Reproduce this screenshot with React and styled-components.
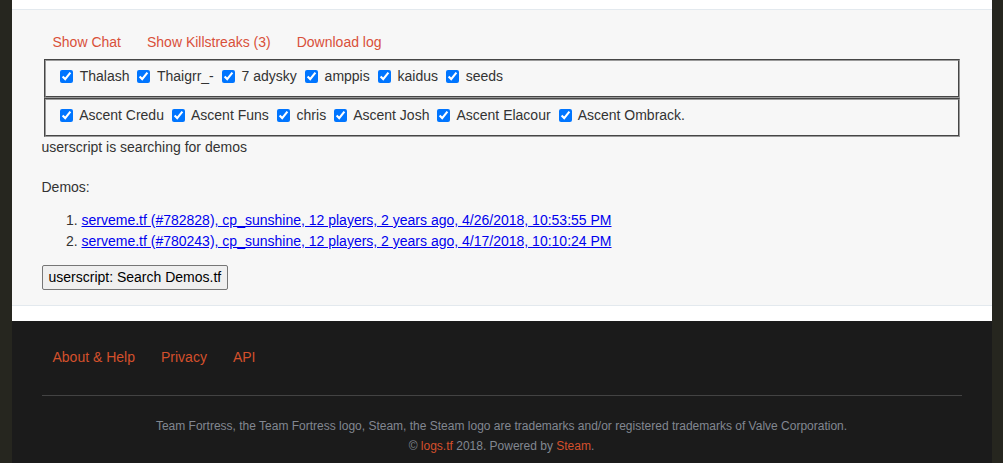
import React from 'react';
import styled, { createGlobalStyle } from 'styled-components';

const GlobalStyle = createGlobalStyle`
  html, body {
    margin: 0;
    padding: 0;
    background: #26261f;
  }
  body {
    font-family: "Liberation Sans", Arial, sans-serif;
    font-size: 14px;
    line-height: 20px;
    color: #333;
  }
`;

const Page = styled.div`
  width: 980px;
  margin: 0 auto;
`;

const Main = styled.div`
  background: #fff;
  padding: 9px 0 15px;
`;

const Panel = styled.div`
  background: #f7f7f7;
  border-top: 1px solid #e3e9ee;
  border-bottom: 1px solid #e3e9ee;
  padding: 22px 30px 15px;
`;

const Nav = styled.div`
  display: flex;
  gap: 26px;
  padding-left: 11px;
  margin-bottom: 7px;
`;

const NavLink = styled.a`
  color: ${(p) => (p.$dark ? '#d4502c' : '#d9503a')};
  text-decoration: none;
  cursor: pointer;
`;

const Players = styled.fieldset`
  margin: 0 2px;
  padding: 5px 10.5px 10px;
  border: 2px groove #9a9a9a;
  font-size: 14px;
`;

const Player = styled.label`
  white-space: nowrap;
  input {
    margin: 3px 3px 3px 4px;
    vertical-align: -2px;
    width: 13px;
    height: 13px;
  }
`;

const Status = styled.div``;

const Heading = styled.div`
  margin-top: 20px;
`;

const DemoList = styled.ol`
  margin: 13px 0 13px;
  padding-left: 40px;
  li {
    line-height: 21px;
  }
  a {
    color: #0000ee;
    text-decoration: underline;
  }
`;

const Button = styled.button`
  font-family: "Liberation Sans", Arial, sans-serif;
  font-size: 14px;
  line-height: 17px;
  color: #000;
  background: #efefef;
  border: 1px solid #767676;
  border-radius: 2px;
  padding: 3px 6px;
  margin: 0;
`;

const Footer = styled.footer`
  background: #1b1b1b;
  padding: 26px 30px 20px;
`;

const FooterNav = styled(Nav)`
  margin-bottom: 0;
  padding-bottom: 28px;
  border-bottom: 1px solid #434343;
`;

const Legal = styled.div`
  margin-top: 20px;
  text-align: center;
  font-size: 12px;
  line-height: 20px;
  color: #828791;
  a {
    color: #d4502c;
    text-decoration: none;
  }
`;

const teams = [
  ['Thalash', 'Thaigrr_-', '7 adysky', 'amppis', 'kaidus', 'seeds'],
  ['Ascent Credu', 'Ascent Funs', 'chris', 'Ascent Josh', 'Ascent Elacour', 'Ascent Ombrack.'],
];

const demos = [
  'serveme.tf (#782828), cp_sunshine, 12 players, 2 years ago, 4/26/2018, 10:53:55 PM',
  'serveme.tf (#780243), cp_sunshine, 12 players, 2 years ago, 4/17/2018, 10:10:24 PM',
];

export default function App() {
  return (
    <Page>
      <GlobalStyle />
      <Main>
        <Panel>
          <Nav>
            <NavLink>Show Chat</NavLink>
            <NavLink>Show Killstreaks (3)</NavLink>
            <NavLink>Download log</NavLink>
          </Nav>
          {teams.map((team, i) => (
            <Players key={i}>
              {team.map((name) => (
                <React.Fragment key={name}>
                  <Player>
                    <input type="checkbox" defaultChecked /> {name}
                  </Player>{' '}
                </React.Fragment>
              ))}
            </Players>
          ))}
          <Status>userscript is searching for demos</Status>
          <Heading>Demos:</Heading>
          <DemoList>
            {demos.map((d) => (
              <li key={d}>
                <a href="#">{d}</a>
              </li>
            ))}
          </DemoList>
          <Button>userscript: Search Demos.tf</Button>
        </Panel>
      </Main>
      <Footer>
        <FooterNav>
          <NavLink $dark>About &amp; Help</NavLink>
          <NavLink $dark>Privacy</NavLink>
          <NavLink $dark>API</NavLink>
        </FooterNav>
        <Legal>
          <div>
            Team Fortress, the Team Fortress logo, Steam, the Steam logo are trademarks and/or registered trademarks of Valve Corporation.
          </div>
          <div>
            © <a href="#">logs.tf</a> 2018. Powered by <a href="#">Steam</a>.
          </div>
        </Legal>
      </Footer>
    </Page>
  );
}
